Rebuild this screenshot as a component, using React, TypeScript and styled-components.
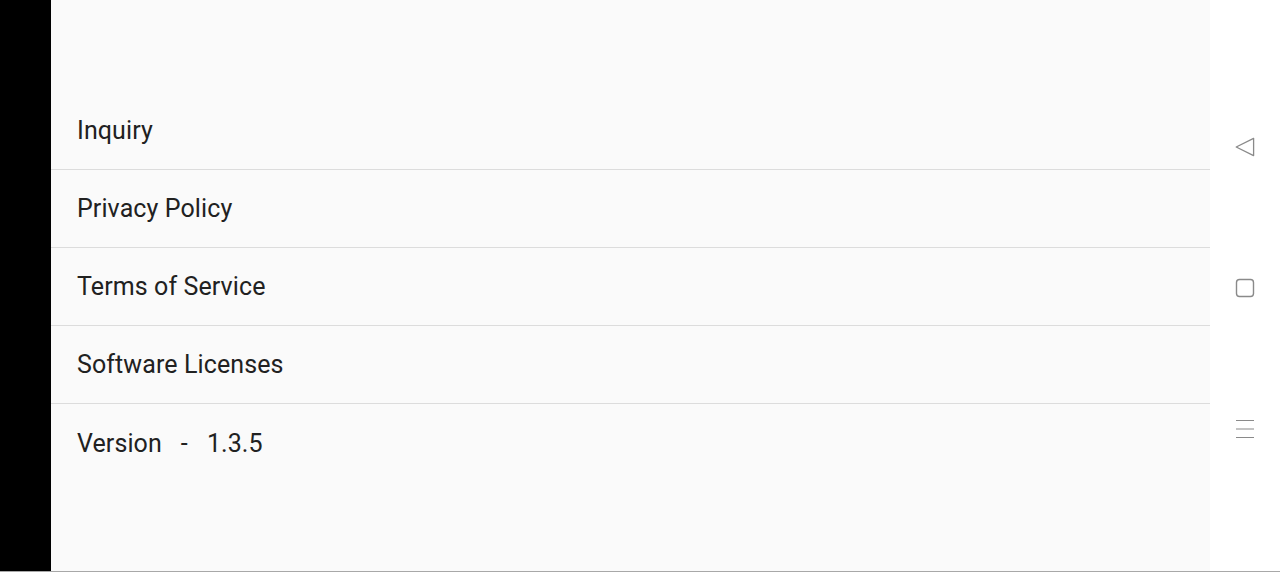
import React from 'react';
import styled, { createGlobalStyle } from 'styled-components';

const GlobalStyle = createGlobalStyle`
    html, body {
        margin: 0;
        padding: 0;
        background: #000;
    }
    body {
        font-family: Roboto, "Noto Sans", Arial, sans-serif;
    }
`;

const items = ['Inquiry', 'Privacy Policy', 'Terms of Service', 'Software Licenses'];

const App = () => {
    return (
        <>
            <GlobalStyle />
            <Screen>
                <Edge />
                <Panel>
                    <MenuList>
                        {items.map(label => (
                            <MenuRow key={label} divided>
                                <MenuLabel>{label}</MenuLabel>
                            </MenuRow>
                        ))}
                        <MenuRow divided={false}>
                            <MenuLabel>
                                Version<Dash>-</Dash>1.3.5
                            </MenuLabel>
                        </MenuRow>
                    </MenuList>
                </Panel>
                <NavBar>
                    <NavButton aria-label="back">
                        <svg width="20" height="20" viewBox="0 0 20 20" fill="none" stroke="#8a8a8a" strokeWidth="1.3" strokeLinejoin="round">
                            <path d="M1.2 10 L18.6 1.4 L18.6 18.6 Z" />
                        </svg>
                    </NavButton>
                    <NavButton aria-label="home">
                        <svg width="20" height="20" viewBox="0 0 20 20" fill="none" stroke="#8a8a8a" strokeWidth="1.4">
                            <rect x="1.5" y="1.5" width="17" height="17" rx="3" />
                        </svg>
                    </NavButton>
                    <NavButton aria-label="menu">
                        <svg width="20" height="20" viewBox="0 0 20 20" fill="none" stroke="#8a8a8a" strokeWidth="1.2">
                            <path d="M1 1.5 H19 M1 10 H19 M1 18.5 H19" />
                        </svg>
                    </NavButton>
                </NavBar>
            </Screen>
        </>
    );
};

export default App;

/*-----------------STYLES-----------------*/
const Screen = styled.div`
    width: 1280px;
    height: 572px;
    display: flex;
    box-sizing: border-box;
    border-bottom: 1px solid #a8a8a8;
    overflow: hidden;
`;

const Edge = styled.div`
    width: 51px;
    flex-shrink: 0;
    background: #000;
`;

const Panel = styled.div`
    flex: 1;
    background: #fafafa;
    padding-top: 92px;
`;

const MenuList = styled.div`
    display: flex;
    flex-direction: column;
`;

const MenuRow = styled.div<{ divided: boolean }>`
    height: 78px;
    box-sizing: border-box;
    display: flex;
    align-items: center;
    padding-left: 26px;
    border-bottom: ${p => (p.divided ? '1px solid #dcdcdc' : 'none')};
`;

const MenuLabel = styled.span`
    font-size: 25px;
    color: #212121;
    letter-spacing: 0.1px;
`;

const Dash = styled.span`
    display: inline-block;
    margin: 0 19px;
`;

const NavBar = styled.div`
    width: 70px;
    flex-shrink: 0;
    background: #fff;
    display: flex;
    flex-direction: column;
    align-items: center;
    padding-top: 137px;
    gap: 121px;
`;

const NavButton = styled.div`
    width: 20px;
    height: 20px;
    display: flex;
`;
